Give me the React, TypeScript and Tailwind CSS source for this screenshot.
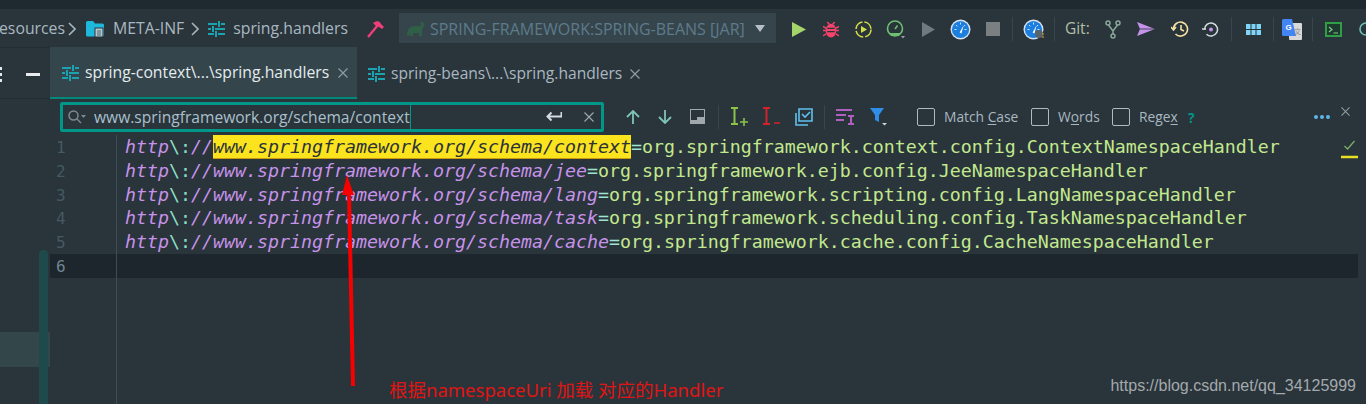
import React from 'react';

const uiFont = "font-['Open_Sans','Noto_Sans',sans-serif]";

function SlidersIcon() {
  return (
    <svg width="17" height="16" viewBox="0 0 17 16" fill="none" stroke="#1aa3b0" strokeWidth="2" className="shrink-0">
      <path d="M0 3h9M13 3h4M0 8h3M7 8h10M0 13h6M10 13h7" />
      <path d="M11 0v6M5 5v6M8 10v6" />
    </svg>
  );
}

function Chevron() {
  return (
    <svg width="8" height="14" viewBox="0 0 8 14" fill="none" stroke="#a7b4bb" strokeWidth="1.6" className="shrink-0">
      <path d="M1 1l6 6-6 6" />
    </svg>
  );
}

function Close({ size = 10, color = '#8f9ca3' }: { size?: number; color?: string }) {
  return (
    <svg width={size} height={size} viewBox="0 0 10 10" fill="none" stroke={color} strokeWidth="1.2" className="shrink-0">
      <path d="M0.5 0.5l9 9M9.5 0.5l-9 9" />
    </svg>
  );
}

function Gauge({ badge }: { badge?: boolean }) {
  return (
    <svg width="21" height="21" viewBox="0 0 21 21" className="shrink-0">
      <circle cx="10.5" cy="10.5" r="10" fill="#d8e2ea" />
      <circle cx="10.5" cy="10.5" r="8.6" fill="#1c7fe0" />
      <path d="M10.5 3.5v2M4.5 10.5h2M14.5 10.5h2M6 6l1.4 1.4M15 6l-1.4 1.4" stroke="#cfe6fb" strokeWidth="1" />
      <path d="M13.6 6.2L9.6 13.6l1.8.8z" fill="#fff" />
      {badge && <circle cx="16" cy="15" r="4" fill="#59636a" />}
      {badge && <path d="M19 15h2M19 18h2" stroke="#e8b020" strokeWidth="1" />}
    </svg>
  );
}

function Toolbar() {
  return (
    <div className={`flex h-[38px] shrink-0 items-center overflow-hidden pt-[2px] text-[15.8px] text-[#a9b8c0] ${uiFont}`}>
      <span className="ml-[-1px] w-[63px] shrink-0 whitespace-nowrap">esources</span>
      <span className="ml-[6px]"><Chevron /></span>
      <svg width="18" height="16" viewBox="0 0 18 16" className="ml-[10px] shrink-0">
        <path d="M0 1.5A1.5 1.5 0 0 1 1.5 0H7l2 2.5h7.5A1.5 1.5 0 0 1 18 4v10a1.5 1.5 0 0 1-1.5 1.5h-15A1.5 1.5 0 0 1 0 14z" fill="#1fb8dd" />
        <rect x="9" y="7" width="8" height="9" fill="#b6c8d0" stroke="#29343b" />
        <path d="M11 10h4M11 12h4M11 14h4" stroke="#516069" />
      </svg>
      <span className="ml-[9px] shrink-0">META-INF</span>
      <span className="ml-[7px]"><Chevron /></span>
      <span className="ml-[9px]"><SlidersIcon /></span>
      <span className="ml-[8px] shrink-0">spring.handlers</span>
      <svg width="18" height="18" viewBox="0 0 18 18" fill="none" className="ml-[19px] shrink-0">
        <path d="M1 17L11 5" stroke="#ef3f7a" strokeWidth="2.4" />
        <path d="M6 3c4-3 7-2 8 1l3 3-2 2-3-2-3-1z" fill="#ef3f7a" />
      </svg>

      <div className="ml-[14px] flex h-[30px] w-[377px] shrink-0 -translate-y-px items-center bg-[#36454c] pl-[8px]">
        <svg width="18" height="15" viewBox="0 0 18 15" className="shrink-0">
          <path d="M0 15c0-7 3-10 8-10 3 0 5 1 6-1 .5-2-1-2-1-3 2-1 4 0 4 3 0 2-1 3-2 4v7h-3v-3H6v3H3v-3l-1 3z" fill="#2f5f46" />
        </svg>
        <span className="ml-[5px] translate-y-px whitespace-nowrap text-[16px] text-[#5d7b8b]">SPRING-FRAMEWORK:SPRING-BEANS [JAR]</span>
        <span className="ml-[10px] h-0 w-0 shrink-0 border-x-[5.5px] border-t-[7px] border-x-transparent border-t-[#b4c0c6]" />
      </div>

      <svg width="14" height="15" viewBox="0 0 14 15" className="ml-[16px] shrink-0"><path d="M0 0l14 7.5L0 15z" fill="#a5d46a" /></svg>
      <svg width="16" height="17" viewBox="0 0 15 16" className="ml-[17px] shrink-0">
        <ellipse cx="7.5" cy="9" rx="5" ry="6.5" fill="#f5436b" />
        <path d="M0 5l3 2M15 5l-3 2M0 9h3M12 9h3M0 14l3-2M15 14l-3-2M4 1l2 2M11 1L9 3" stroke="#f5436b" strokeWidth="1.4" />
        <path d="M4 7h7M4 10h7" stroke="#29343b" strokeWidth="1.2" />
      </svg>
      <svg width="17" height="17" viewBox="0 0 17 17" fill="none" className="ml-[16px] shrink-0">
        <circle cx="8.5" cy="8.5" r="7.5" stroke="#d5dc45" strokeWidth="1.6" strokeDasharray="10 2" />
        <path d="M6 5l6 3.5L6 12z" fill="#d5dc45" />
      </svg>
      <svg width="19" height="19" viewBox="0 0 19 19" fill="none" className="ml-[14px] shrink-0">
        <circle cx="9" cy="8.5" r="7.5" stroke="#6fbf73" strokeWidth="1.6" />
        <path d="M3 13h12l-2 3H5z" fill="#6fbf73" />
        <path d="M9 9l2.5-3.5" stroke="#6fbf73" strokeWidth="1.6" />
        <path d="M15 16h4l-2 2.5z" fill="#9aa5ab" />
      </svg>
      <svg width="13" height="15" viewBox="0 0 13 15" className="ml-[17px] shrink-0"><path d="M0 0l13 7.5L0 15z" fill="#6f7a80" /></svg>
      <span className="ml-[15px] shrink-0"><Gauge /></span>
      <span className="ml-[15px] h-[14px] w-[14px] shrink-0 bg-[#7a7f82]" />
      <span className="ml-[12px] h-[24px] w-px shrink-0 bg-[#37454c]" />
      <span className="ml-[10px] shrink-0"><Gauge badge /></span>
      <span className="ml-[10px] h-[24px] w-px shrink-0 bg-[#37454c]" />
      <span className="ml-[10px] shrink-0 text-[15.5px] text-[#b4bfa8]">Git:</span>
      <svg width="16" height="19" viewBox="0 0 16 19" fill="none" stroke="#8aa898" strokeWidth="1.5" className="ml-[15px] shrink-0">
        <circle cx="3" cy="3" r="2" /><circle cx="13" cy="3" r="2" /><circle cx="8" cy="16" r="2" />
        <path d="M3.5 5L8 11l4.500-6M8 11v3" />
      </svg>
      <svg width="18" height="14" viewBox="0 0 18 14" className="ml-[16px] shrink-0"><path d="M0 0l18 7-18 7 3-7z" fill="#c792ea" /><path d="M3 7h15" stroke="#29343b" strokeWidth="0.8" /></svg>
      <svg width="18" height="18" viewBox="0 0 18 18" fill="none" stroke="#f5e2a0" strokeWidth="1.6" className="ml-[16px] shrink-0">
        <path d="M2.5 9a7 7 0 1 1 2 5" /><path d="M0 7l2.5 3L5 7" /><path d="M10 5v4.5l3 1.5" />
      </svg>
      <svg width="17" height="17" viewBox="0 0 17 17" fill="none" stroke="#d5dde0" strokeWidth="1.5" className="ml-[13px] shrink-0">
        <path d="M2.5 8.5a6.5 6.5 0 1 1 2 4.7" /><path d="M0 8h4" />
        <circle cx="9" cy="8.5" r="2" fill="#c792ea" stroke="none" />
      </svg>
      <span className="ml-[12px] h-[24px] w-px shrink-0 bg-[#37454c]" />
      <svg width="15" height="11" viewBox="0 0 15 11" className="ml-[14px] shrink-0">
        <rect width="15" height="11" fill="#7fd4f8" />
        <path d="M5 0v11M10 0v11M0 5.5h15" stroke="#29343b" strokeWidth="1" />
      </svg>
      <span className="ml-[12px] h-[24px] w-px shrink-0 bg-[#37454c]" />
      <svg width="20" height="21" viewBox="0 0 20 21" className="ml-[8px] shrink-0">
        <rect x="7" y="4" width="13" height="17" rx="1" fill="#d9d9d9" />
        <path d="M1.5 0H10l4 17H1.5A1.5 1.5 0 0 1 0 15.500v-14A1.500 1.500 0 0 1 1.500 0z" fill="#4285f4" />
        <text x="3.500" y="11" fontSize="8" fontWeight="700" fill="#fff" fontFamily="Liberation Sans, sans-serif">G</text>
        <text x="12" y="15" fontSize="7" fill="#8a8a8a" fontFamily="Noto Sans CJK SC, sans-serif">文</text>
      </svg>
      <span className="ml-[10px] h-[24px] w-px shrink-0 bg-[#37454c]" />
      <svg width="17" height="15" viewBox="0 0 17 15" fill="none" className="ml-[12px] shrink-0">
        <rect x="1" y="1" width="15" height="13" stroke="#2f9e44" strokeWidth="2" fill="#1f3a30" />
        <path d="M4 5l3 2.500-3 2.500M8.500 11H13" stroke="#7ccf87" strokeWidth="1.2" />
      </svg>
      <svg width="12" height="16" viewBox="0 0 12 16" fill="none" stroke="#6fc0b8" strokeWidth="1.6" className="ml-[17px] shrink-0">
        <circle cx="7" cy="8" r="6" />
      </svg>
    </div>
  );
}

function Sidebar() {
  return (
    <div className="flex w-[50px] shrink-0 flex-col">
      <div className="flex h-[52px] shrink-0 items-center border-y border-[#222c33] pt-[2px]">
        <div className="flex w-[3px] flex-col gap-[3px]">
          <span className="h-[3px] w-[2px] bg-[#e4e8ea]" />
          <span className="h-[3px] w-[2px] bg-[#e4e8ea]" />
          <span className="h-[3px] w-[2px] bg-[#e4e8ea]" />
        </div>
        <span className="ml-[23px] h-[3px] w-[14px] bg-[#e8ecee]" />
      </div>
      <div className="flex min-h-0 flex-1">
        <div className="flex w-[39px] flex-col pt-[233px]">
          <div className="h-[35px] bg-[#33464a]" />
        </div>
        <div className="mt-[151px] w-[9px] rounded-t-[4px] bg-[#1f4a4c]" />
        <div className="mt-[233px] h-[35px] w-[2px] bg-[#33464a]" />
      </div>
    </div>
  );
}

function TabBar() {
  return (
    <div className={`flex h-[52px] shrink-0 ${uiFont}`}>
      <div className="flex w-[307px] items-center border-b-[2px] border-[#00897b] bg-[#34454b] pl-[12px] pt-[2px] text-[15.75px] text-[#e4ecef]">
        <SlidersIcon />
        <span className="ml-[6px] whitespace-nowrap">spring-context\...\spring.handlers</span>
        <span className="ml-[9px]"><Close /></span>
      </div>
      <div className="flex items-center pl-[11px] pt-[2px] text-[15.6px] text-[#a9b8c0]">
        <SlidersIcon />
        <span className="ml-[6px] whitespace-nowrap">spring-beans\...\spring.handlers</span>
        <span className="ml-[8px]"><Close /></span>
      </div>
    </div>
  );
}

function Check({ label, width }: { label: React.ReactNode; width: string }) {
  return (
    <div className={`flex items-center ${width}`}>
      <span className="h-[18px] w-[18px] shrink-0 rounded-[2px] border border-[#aebbc2]" />
      <span className="ml-[9px] translate-y-px whitespace-nowrap text-[13.8px] text-[#a9b8c0]">{label}</span>
    </div>
  );
}

function FindBar() {
  return (
    <div className={`relative flex h-[35px] shrink-0 items-center ${uiFont}`}>
      <div className="ml-[10px] flex h-[30px] w-[544px] shrink-0 items-center rounded-[2px] border-[3px] border-[#009688] pl-[5px]">
        <svg width="18" height="14" viewBox="0 0 18 14" fill="none" stroke="#7d8a91" strokeWidth="1.5" className="shrink-0">
          <circle cx="5.500" cy="5.500" r="4.500" /><path d="M9 9l4 4" />
          <path d="M13 5h5l-2.500 3z" fill="#7d8a91" stroke="none" />
        </svg>
        <span className="ml-[8px] translate-y-px whitespace-nowrap text-[15.6px] text-[#a9c0cc]">www.springframework.org/schema/context</span>
        <span className="h-full w-px shrink-0 bg-[#009688]" />
        <svg width="16" height="11" viewBox="0 0 16 11" fill="none" stroke="#d5dde0" strokeWidth="2" className="ml-[135px] shrink-0">
          <path d="M15.500 1v4.500H1.500M5.500 1.500L1.500 5.500l4 4" />
        </svg>
        <span className="ml-[22px]"><Close color="#9aa6ac" /></span>
      </div>

      <svg width="14" height="14" viewBox="0 0 14 14" fill="none" stroke="#7fc4b8" strokeWidth="1.8" className="ml-[22px] shrink-0"><path d="M1 7l6-6 6 6M7 1v13" /></svg>
      <svg width="14" height="14" viewBox="0 0 14 14" fill="none" stroke="#7fc4b8" strokeWidth="1.8" className="ml-[18px] shrink-0"><path d="M1 7l6 6 6-6M7 13V0" /></svg>
      <svg width="15" height="15" viewBox="0 0 15 15" className="ml-[18px] shrink-0">
        <rect x="0.500" y="0.500" width="14" height="14" fill="none" stroke="#a0a8ac" />
        <rect x="7" y="8" width="8" height="7" fill="#a0a8ac" />
        <rect x="0" y="11" width="7" height="4" fill="#a0a8ac" />
      </svg>
      <span className="ml-[13px] h-[24px] w-px shrink-0 bg-[#37454c]" />
      <svg width="19" height="20" viewBox="0 0 19 20" fill="none" className="ml-[12px] shrink-0">
        <path d="M0 1h7M0 17h7M3.500 1v16" stroke="#8bc34a" strokeWidth="2" />
        <path d="M9 15h8M13 11v8" stroke="#8bc34a" strokeWidth="1.6" />
      </svg>
      <svg width="17" height="20" viewBox="0 0 17 20" fill="none" className="ml-[13px] shrink-0">
        <path d="M0 1h7M0 17h7M3.500 1v16" stroke="#d0232b" strokeWidth="2" />
        <path d="M11 16h6" stroke="#d0232b" strokeWidth="1.6" />
      </svg>
      <svg width="18" height="18" viewBox="0 0 18 18" fill="none" stroke="#5fc0f0" strokeWidth="1.6" className="ml-[15px] shrink-0">
        <path d="M4 1h13v12H4zM1 5v12h12" /><path d="M7 6l3 3 5-5" />
      </svg>
      <span className="ml-[11px] h-[24px] w-px shrink-0 bg-[#37454c]" />
      <svg width="18" height="16" viewBox="0 0 18 16" fill="none" stroke="#b060c0" strokeWidth="2" className="ml-[11px] shrink-0">
        <path d="M0 1h16M0 6h10M0 11h8M12 7h6M15 7v8M12 15h6" />
      </svg>
      <svg width="18" height="18" viewBox="0 0 18 18" className="ml-[16px] shrink-0">
        <path d="M0 0h14L9 7v7l-4-2V7z" fill="#2f8fe8" />
        <path d="M12 15h5l-2.500 2.500z" fill="#cfd6da" />
      </svg>

      <div className="ml-[29px] flex items-center">
        <Check width="w-[114px]" label={<>Match <span className="underline underline-offset-2">C</span>ase</>} />
        <Check width="w-[81px]" label={<>W<span className="underline underline-offset-2">o</span>rds</>} />
        <Check width="w-[76px]" label={<>Rege<span className="underline underline-offset-2">x</span></>} />
      </div>
      <span className="translate-y-px text-[14px] font-bold text-[#009688]">?</span>
      <span className="ml-auto mr-[36px] flex gap-[2px]">
        <span className="h-[4px] w-[4px] rounded-full bg-[#5fb4e8]" />
        <span className="h-[4px] w-[4px] rounded-full bg-[#5fb4e8]" />
        <span className="h-[4px] w-[4px] rounded-full bg-[#5fb4e8]" />
      </span>
      <span className="absolute right-[16px] top-[8px]"><Close size={9} /></span>
    </div>
  );
}

const lines = [
  { path: 'www.springframework.org/schema/context', value: 'org.springframework.context.config.ContextNamespaceHandler', hit: true },
  { path: 'www.springframework.org/schema/jee', value: 'org.springframework.ejb.config.JeeNamespaceHandler' },
  { path: 'www.springframework.org/schema/lang', value: 'org.springframework.scripting.config.LangNamespaceHandler' },
  { path: 'www.springframework.org/schema/task', value: 'org.springframework.scheduling.config.TaskNamespaceHandler' },
  { path: 'www.springframework.org/schema/cache', value: 'org.springframework.cache.config.CacheNamespaceHandler' },
];

function Editor() {
  return (
    <div className="flex min-h-0 flex-1 flex-col pr-[8px] pt-px font-['DejaVu_Sans_Mono',monospace] text-[18.27px] leading-[24px]">
      {lines.map((line, i) => (
        <div key={i} className="flex h-[23.8px] shrink-0 whitespace-pre">
          <div className="w-[67px] shrink-0 border-r border-[#3d4d55] pl-[6px] pt-px text-[16px] text-[#465a63]">{i + 1}</div>
          <div className="pl-[8px]">
            <span className="italic text-[#c792ea]">http</span>
            <span className="text-[#89ddc8]">\:</span>
            <span className="italic text-[#c792ea]">//</span>
            {line.hit ? (
              <span className="inline-block h-[24px] border-b-[1px] border-[#c79a10] bg-[#fbe31e] italic text-[#2a3238]">{line.path}</span>
            ) : (
              <span className="italic text-[#c792ea]">{line.path}</span>
            )}
            <span className="text-[#9fe3d0]">=</span>
            <span className="text-[#c3e88d]">{line.value}</span>
          </div>
        </div>
      ))}
      <div className="flex h-[24px] shrink-0 bg-[#1d262d]">
        <div className="w-[67px] shrink-0 border-r border-[#3d4d55] pl-[6px] pt-px text-[16px] text-[#6f8590]">6</div>
      </div>
      <div className="flex-1">
        <div className="h-full w-[67px] border-r border-[#3d4d55]" />
      </div>
    </div>
  );
}

export default function App() {
  return (
    <div className="relative flex h-[404px] w-[1366px] flex-col overflow-hidden bg-[#29343b]">
      <div className="h-[9px] shrink-0 bg-[#1f2930]" />
      <Toolbar />
      <div className="flex min-h-0 flex-1">
        <Sidebar />
        <div className="flex min-w-0 flex-1 flex-col">
          <TabBar />
          <FindBar />
          <Editor />
        </div>
      </div>

      {/* error stripe mark */}
      <svg width="18" height="20" viewBox="0 0 18 20" fill="none" className="absolute left-[1341px] top-[139px]">
        <path d="M3.500 7l3 3 7-8" stroke="#7fb06a" strokeWidth="1.200" />
        <path d="M0 18h17" stroke="#e8e020" strokeWidth="2.500" />
      </svg>

      {/* annotation drawn on the screenshot */}
      <svg width="24" height="216" viewBox="0 0 24 216" fill="none" className="absolute left-[337px] top-[170px]">
        <path d="M16 216L12 24" stroke="#f80000" strokeWidth="4" strokeLinecap="round" />
        <path d="M10 5L5 25h12z" fill="#f80000" />
      </svg>
      <span className="absolute left-[389px] top-[376px] whitespace-nowrap font-['Noto_Sans','Noto_Sans_CJK_SC',sans-serif] text-[18.5px] text-[#e01414]">根据namespaceUri 加载 对应的Handler</span>
      <span className="absolute right-[10px] top-[374px] whitespace-nowrap font-['Liberation_Sans',sans-serif] text-[16px] text-[#a4a9ac]">https://blog.csdn.net/qq_34125999</span>
    </div>
  );
}
